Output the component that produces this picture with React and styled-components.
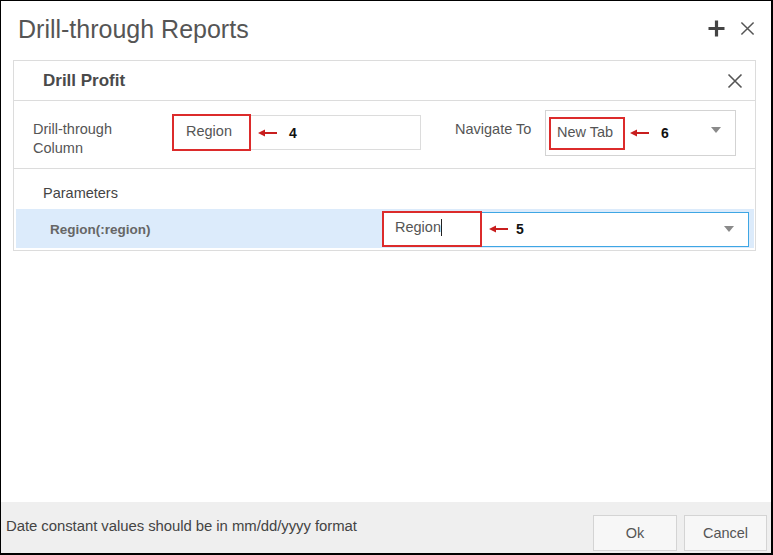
import React from 'react';
import styled, { createGlobalStyle } from 'styled-components';

const GlobalStyle = createGlobalStyle`
  html, body {
    margin: 0;
    padding: 0;
    background: #fff;
  }
  body {
    font-family: "Liberation Sans", Arial, sans-serif;
  }
`

const Window = styled.div`
  width: 773px;
  height: 555px;
  box-sizing: border-box;
  border: 1px solid #000;
  border-right-width: 2px;
  border-bottom-width: 2px;
  display: flex;
  flex-direction: column;
  background: #fff;
`

const TitleBar = styled.div`
  height: 57px;
  display: flex;
  align-items: center;
  justify-content: space-between;
  padding: 0 16px 0 17px;
  flex-shrink: 0;
`

const Title = styled.h1`
  margin: 0;
  font-size: 25px;
  font-weight: normal;
  color: #555;
`

const TitleIcons = styled.div`
  display: flex;
  align-items: center;
  gap: 15px;
  margin-top: -2px;
`

const Body = styled.div`
  flex: 1;
  padding: 2px 15px 0 12px;
`

const Panel = styled.div`
  border: 1px solid #dcdcdc;
  padding: 0 1px 2px 2px;
`

const PanelHeader = styled.div`
  height: 39px;
  display: flex;
  align-items: center;
  justify-content: space-between;
  padding: 0 12px 0 29px;
  margin: 0 -1px 0 -2px;
  border-bottom: 1px solid #dcdcdc;
`

const PanelTitle = styled.div`
  font-size: 17px;
  font-weight: bold;
  color: #4a4a4a;
`

const FieldRow = styled.div`
  height: 67px;
  display: flex;
  align-items: center;
  margin: 0 -1px 0 -2px;
  border-bottom: 1px solid #dcdcdc;
  padding-left: 19px;
`

const Label = styled.div`
  width: ${p => p.width}px;
  font-size: 14.5px;
  line-height: 19px;
  color: #555;
  align-self: flex-start;
  margin-top: ${p => p.top}px;
`

const TextInput = styled.div`
  width: 247px;
  height: 33px;
  box-sizing: content-box;
  border: 1px solid #dcdcdc;
  display: flex;
  align-items: center;
  margin-top: -4px;
`

const SelectBox = styled.div`
  width: 191px;
  height: 46px;
  border: 1px solid #d3d3d3;
  display: flex;
  align-items: flex-start;
  padding: 6px 14px 0 3px;
  box-sizing: border-box;
  margin-top: -3px;
`

const Mark = styled.div`
  box-sizing: border-box;
  height: ${p => p.h}px;
  width: ${p => p.w}px;
  border: 2px solid #dc2b2b;
  display: flex;
  align-items: center;
  padding-left: ${p => p.pad}px;
  padding-bottom: ${p => p.lift || 0}px;
  font-size: 14.5px;
  color: #555;
  flex-shrink: 0;
  margin: ${p => p.m || '0'};
`

const Callout = styled.span`
  display: inline-flex;
  align-items: center;
  margin-left: ${p => p.gap}px;
  margin-top: ${p => p.top || 0}px;
  gap: ${p => p.space || 12}px;
  font-size: 14px;
  font-weight: bold;
  color: #111;
`

const Caret = styled.svg`
  margin-left: auto;
  flex-shrink: 0;
  margin-top: ${p => p.top || 0}px;
`

const ParamsTitle = styled.div`
  height: 40px;
  display: flex;
  align-items: center;
  padding-left: 29px;
  font-size: 14.5px;
  color: #444;
  margin: 0 -1px 0 -2px;
  padding-top: 7px;
  box-sizing: border-box;
`

const ParamRow = styled.div`
  height: 39px;
  background: #dcebfb;
  display: flex;
  align-items: center;
`

const ParamName = styled.div`
  width: 366px;
  box-sizing: border-box;
  padding-left: 34px;
  font-size: 13.5px;
  font-weight: bold;
  color: #666;
  padding-top: 1px;
`

const ParamInput = styled.div`
  width: 367px;
  height: 35px;
  box-sizing: border-box;
  border: 1px solid #3ea6e4;
  background: #fff;
  display: flex;
  align-items: center;
  padding-right: 14px;
  margin-top: 1px;
`

const TypedText = styled.span`
  border-right: 1px solid #222;
  line-height: 17px;
`

const Footer = styled.div`
  height: 51px;
  box-sizing: border-box;
  background: #efefef;
  display: flex;
  justify-content: space-between;
  align-items: flex-end;
  padding: 0 4px 2px 5px;
`

const Note = styled.div`
  align-self: flex-start;
  margin-top: 16px;
  font-size: 14.9px;
  color: #444;
  letter-spacing: -0.05px;
`

const Buttons = styled.div`
  display: flex;
  gap: 7px;
`

const Button = styled.button`
  width: ${p => p.w}px;
  height: 36px;
  background: #f7f7f7;
  border: 1px solid #d4d4d4;
  font-family: "Liberation Sans", Arial, sans-serif;
  font-size: 14.5px;
  color: #555;
  padding: 0;
`

function Arrow() {
  return (
    <svg width="19" height="8" viewBox="0 0 19 8">
      <path d="M0 4 L7 0.5 L7 7.5 Z" fill="#c81e1e" />
      <line x1="6" y1="4" x2="19" y2="4" stroke="#c81e1e" strokeWidth="2" />
    </svg>
  );
}

function Close({ size, color }) {
  return (
    <svg width={size} height={size} viewBox="0 0 16 16">
      <path d="M1.5 1.5 L14.5 14.5 M14.5 1.5 L1.5 14.5" stroke={color} strokeWidth="1.6" />
    </svg>
  );
}

function Plus() {
  return (
    <svg width="17" height="17" viewBox="0 0 17 17">
      <path d="M8.5 0.5 V16.5 M0.5 8.5 H16.5" stroke="#444" strokeWidth="3.2" />
    </svg>
  );
}

function DropCaret({ top }) {
  return (
    <Caret width="10" height="6" viewBox="0 0 10 6" top={top}>
      <path d="M0 0 H10 L5 6 Z" fill="#8a8a8a" />
    </Caret>
  );
}

export default function App() {
  return (
    <>
      <GlobalStyle />
      <Window>
        <TitleBar>
          <Title>Drill-through Reports</Title>
          <TitleIcons>
            <Plus />
            <Close size={15} color="#555" />
          </TitleIcons>
        </TitleBar>
        <Body>
          <Panel>
            <PanelHeader>
              <PanelTitle>Drill Profit</PanelTitle>
              <Close size={16} color="#555" />
            </PanelHeader>
            <FieldRow>
              <Label width={139} top={19}>Drill-through<br />Column</Label>
              <TextInput>
                <Mark w={79} h={37} pad={12} lift={4} m="0 0 0 -1px">Region</Mark>
                <Callout gap={7}><Arrow /> 4</Callout>
              </TextInput>
              <Label width={90} top={19} style={{ marginLeft: 34 }}>Navigate To</Label>
              <SelectBox>
                <Mark w={76} h={33} pad={6} lift={3}>New Tab</Mark>
                <Callout gap={5} top={8}><Arrow /> 6</Callout>
                <DropCaret top={10} />
              </SelectBox>
            </FieldRow>
            <ParamsTitle>Parameters</ParamsTitle>
            <ParamRow>
              <ParamName>Region(:region)</ParamName>
              <ParamInput>
                <Mark w={100} h={36} pad={11} lift={4} m="0 0 0 -1px"><TypedText>Region</TypedText></Mark>
                <Callout gap={7} space={8}><Arrow /> 5</Callout>
                <DropCaret />
              </ParamInput>
            </ParamRow>
          </Panel>
        </Body>
        <Footer>
          <Note>Date constant values should be in mm/dd/yyyy format</Note>
          <Buttons>
            <Button w={84}>Ok</Button>
            <Button w={83}>Cancel</Button>
          </Buttons>
        </Footer>
      </Window>
    </>
  );
}
